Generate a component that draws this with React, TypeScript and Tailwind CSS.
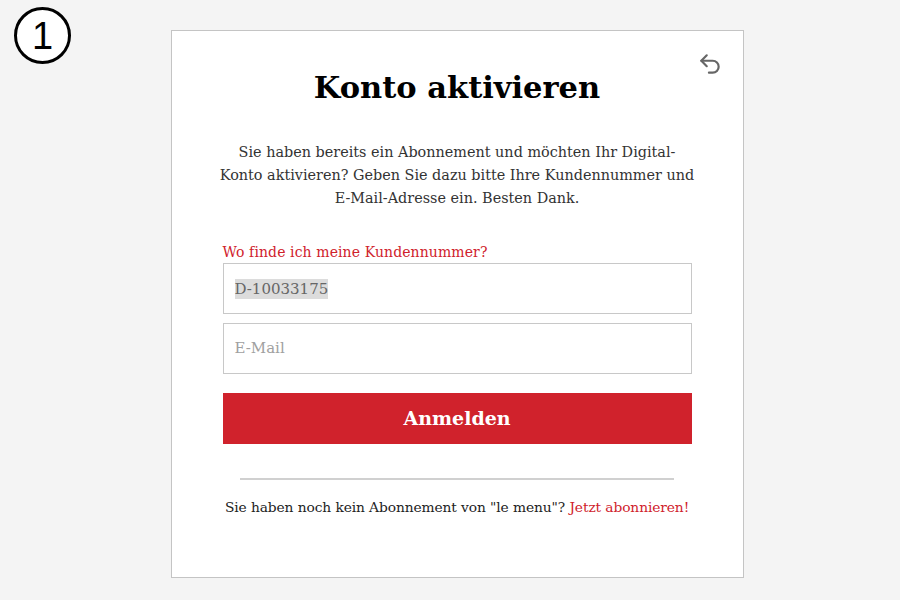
import { Undo2 } from 'lucide-react';

const serif = { fontFamily: '"DejaVu Serif", "Liberation Serif", serif' };

export default function App() {
  return (
    <div className="relative h-[600px] w-[900px] bg-[#f4f4f4]" style={serif}>
      {/* step badge */}
      <div className="absolute left-[14px] top-[7px] flex h-[57px] w-[57px] items-center justify-center rounded-full border-[3px] border-black bg-white">
        <span
          className="text-[38px] leading-none text-black"
          style={{ fontFamily: '"Liberation Sans", Arial, sans-serif' }}
        >
          1
        </span>
      </div>

      <div className="flex justify-center pl-[14px] pt-[30px]">
        <div className="relative flex h-[548px] w-[573px] flex-col items-center border border-[#c4c4c4] bg-white">
          <button className="absolute right-[20px] top-[20px] text-[#666]">
            <Undo2 size={26} strokeWidth={2} />
          </button>

          <h1 className="mt-[36px] text-[30.5px] font-black leading-[40px] text-black">
            Konto aktivieren
          </h1>

          <p className="mt-[34px] text-center text-[14.4px] leading-[23px] text-[#333]">
            Sie haben bereits ein Abonnement und möchten Ihr Digital-
            <br />
            Konto aktivieren? Geben Sie dazu bitte Ihre Kundennummer und
            <br />
            E-Mail-Adresse ein. Besten Dank.
          </p>

          <div className="mt-[32px] flex w-[469px] flex-col">
            <a className="text-[14px] leading-[20px] tracking-[0.1px] text-[#d0222c]">
              Wo finde ich meine Kundennummer?
            </a>
            <div className="mt-[1px] flex h-[51px] items-center border border-[#c8c8c8] px-[11px]">
              <span className="bg-[#dcdcdc] text-[15px] leading-[20px] text-[#666]">
                D-10033175
              </span>
            </div>
            <div className="mt-[9px] flex h-[51px] items-center border border-[#c8c8c8] px-[11px]">
              <span className="text-[15px] text-[#a0a0a0]">E-Mail</span>
            </div>
            <button className="mt-[19px] flex h-[51px] items-center justify-center bg-[#d0222c] text-[19px] font-bold text-white">
              Anmelden
            </button>
          </div>

          <div className="mt-[34px] h-[2px] w-[434px] bg-[#d0d0d0]" />

          <p className="mt-[17px] text-[13.8px] leading-[20px] tracking-[-0.1px] text-[#222]">
            Sie haben noch kein Abonnement von "le menu"?{' '}
            <a className="text-[#d0222c]">Jetzt abonnieren!</a>
          </p>
        </div>
      </div>
    </div>
  );
}
